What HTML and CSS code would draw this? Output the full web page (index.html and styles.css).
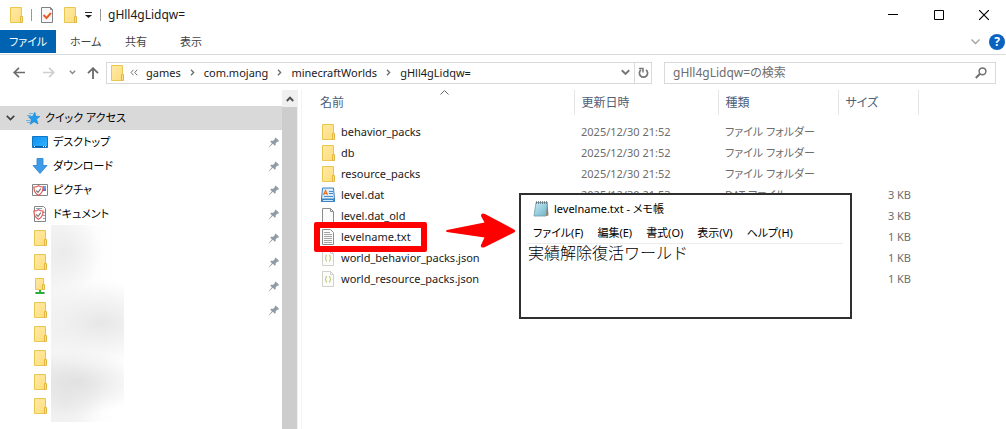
FILE: index.html
```html
<!DOCTYPE html>
<html lang="ja">
  <head>
    <meta charset="UTF-8" />
    <meta name="viewport" content="width=device-width, initial-scale=1.0" />
    <title>gHll4gLidqw=</title>
    <link rel="stylesheet" href="styles.css">
  </head>
  <body>
    <svg class="defs" aria-hidden="true">
      <defs>
        <linearGradient id="paper" x1="0" y1="0" x2="1" y2="1">
          <stop offset="0" stop-color="#ffe9a6" />
          <stop offset="1" stop-color="#ffdd7c" />
        </linearGradient>
        <linearGradient id="sky" x1="0" y1="0" x2="1" y2="1">
          <stop offset="0" stop-color="#0a92f0" />
          <stop offset="1" stop-color="#35b4ff" />
        </linearGradient>
        <linearGradient id="pad" x1="0" y1="0" x2="1" y2="1">
          <stop offset="0" stop-color="#c4ecf6" />
          <stop offset="1" stop-color="#6fb3c8" />
        </linearGradient>
        <symbol id="folder" viewBox="0 0 16 16">
          <path d="M2.5.5h11v15h-11z" fill="url(#paper)" stroke="#e9c64d" />
          <path d="M12.5 9.5h2v6h-2z" fill="#ffe08a" stroke="#e0b742" />
        </symbol>
        <symbol id="netfolder" viewBox="0 0 16 16">
          <path d="M3.5.5h8v11h-8z" fill="url(#paper)" stroke="#e9c64d" />
          <path d="M10.5 6.5h2v5h-2z" fill="#ffe08a" stroke="#e0b742" />
          <path d="M7 12h2v2h3v2H4v-2h3z" fill="#27b03a" />
          <path d="M3 14h1v2H3zM12 14h1v2h-1z" fill="#a5b5a8" />
        </symbol>
        <symbol id="pin" viewBox="0 0 12 12">
          <path d="M7 1l1-1 4 4-1 1-1 0-2 2 0 2-1 1-2.500-2.500L1 11l-1 1 0-1 3.500-4L1.500 5l1-1 2.500 0 2-2z" fill="#8f9ba6" />
        </symbol>
        <symbol id="chev" viewBox="0 0 5 7">
          <path d="M1 .8l2.600 2.700L1 6.200" fill="none" stroke="#6f6f6f" stroke-width="1.400" />
        </symbol>
        <symbol id="json" viewBox="0 0 16 16">
          <path d="M2.500.5h8l3 3v12h-11z" fill="#fcfcfa" stroke="#d0d0cc" />
          <path d="M10.500.5v3h3" fill="none" stroke="#d0d0cc" />
          <path d="M7 5.500h-1v2l-1 .7 1 .8v2h1M9 5.500h1v2l1 .7-1 .8v2h-1" fill="none" stroke="#bcc46c" />
        </symbol>
        <symbol id="shield" viewBox="0 0 12 12">
          <path d="M6 .7c1.500 1.300 3 1.500 5 1.500 0 4-.8 7-5 9-4.200-2-5-5-5-9 2 0 3.500-.2 5-1.500z" fill="#fff" stroke="#e25252" stroke-width="1.300" />
          <path d="M3.500 6l2 2 3-4" fill="none" stroke="#777" stroke-width="1.300" />
        </symbol>
      </defs>
    </svg>

    <header class="titlebar">
      <svg class="icon" width="16" height="16"><use href="#folder" /></svg>
      <span class="divider"></span>
      <button class="tool" aria-label="プロパティ">
        <svg width="16" height="16" viewBox="0 0 16 16">
          <path d="M2.500.5h9l2 2v13h-11z" fill="#f7f7f7" stroke="#828282" />
          <path d="M11.500.5v2h2" fill="none" stroke="#828282" />
          <path d="M4.500 8l3 3 4.500-5" fill="none" stroke="#ea5b25" stroke-width="2" />
        </svg>
      </button>
      <button class="tool" aria-label="新しいフォルダー">
        <svg width="16" height="16"><use href="#folder" /></svg>
      </button>
      <button class="tool" aria-label="カスタマイズ">
        <svg width="8" height="6" viewBox="0 0 8 6"><path d="M0 0h7v1H0zM0 3h7L3.500 6z" fill="#222" /></svg>
      </button>
      <span class="divider"></span>
      <h1 class="title">gHll4gLidqw=</h1>
      <div class="window-buttons">
        <button aria-label="最小化"><svg width="10" height="10" viewBox="0 0 10 10"><path d="M0 4.500h10" stroke="#000" /></svg></button>
        <button aria-label="最大化"><svg width="10" height="10" viewBox="0 0 10 10"><path d="M.5.5h9v9h-9z" fill="none" stroke="#000" /></svg></button>
        <button aria-label="閉じる"><svg width="10" height="10" viewBox="0 0 10 10"><path d="M0 0l10 10M10 0L0 10" stroke="#000" stroke-width="1.200" /></svg></button>
      </div>
    </header>

    <nav class="ribbon">
      <button class="tab file">ファイル</button>
      <button class="tab">ホーム</button>
      <button class="tab">共有</button>
      <button class="tab">表示</button>
      <div class="ribbon-end">
        <button class="tool" aria-label="リボンの展開"><svg width="9" height="6" viewBox="0 0 9 6"><path d="M.5.500l4 4 4-4" fill="none" stroke="#a0a0a0" stroke-width="1.300" /></svg></button>
        <button class="help" aria-label="ヘルプ">?</button>
      </div>
    </nav>

    <div class="address">
      <div class="history">
        <button class="tool nav" aria-label="戻る"><svg width="12" height="11" viewBox="0 0 12 11"><path d="M12 5.500H1.500M6 .8L1.200 5.500 6 10.200" fill="none" stroke="#6b6b6b" stroke-width="1.700" /></svg></button>
        <button class="tool nav" aria-label="進む"><svg width="12" height="11" viewBox="0 0 12 11"><path d="M0 5.500h10.500M6 .8l4.800 4.700L6 10.200" fill="none" stroke="#cfcfcf" stroke-width="1.700" /></svg></button>
        <button class="tool recent" aria-label="最近表示した場所"><svg width="7" height="5" viewBox="0 0 7 5"><path d="M.8.8l2.700 2.700L6.200.8" fill="none" stroke="#8a8a8a" stroke-width="1.500" /></svg></button>
        <button class="tool up" aria-label="上へ"><svg width="12" height="12" viewBox="0 0 12 12"><path d="M6 12V1.500M1 6.200l5-5 5 5" fill="none" stroke="#6b6b6b" stroke-width="1.800" /></svg></button>
      </div>
      <div class="path">
        <svg class="icon" width="16" height="16"><use href="#folder" /></svg>
        <svg class="back" width="8" height="7" viewBox="0 0 8 7"><path d="M3.500.8L1 3.500l2.500 2.700M7.200.8L4.700 3.500l2.500 2.700" fill="none" stroke="#6f6f6f" /></svg>
        <a href="#">games</a>
        <svg width="5" height="7"><use href="#chev" /></svg>
        <a href="#">com.mojang</a>
        <svg width="5" height="7"><use href="#chev" /></svg>
        <a href="#">minecraftWorlds</a>
        <svg width="5" height="7"><use href="#chev" /></svg>
        <a href="#">gHll4gLidqw=</a>
        <div class="path-end">
          <button class="tool" aria-label="以前の場所"><svg width="9" height="7" viewBox="0 0 9 7"><path d="M.8 1.200l3.700 3.700 3.700-3.700" fill="none" stroke="#777" stroke-width="2" /></svg></button>
          <button class="tool reload" aria-label="最新の情報に更新"><svg width="11" height="12" viewBox="0 0 11 12"><path d="M8 2.800a4.100 4.100 0 1 1-5 0" fill="none" stroke="#777" stroke-width="1.700" /><path d="M1 1.500h4v4" fill="none" stroke="#777" stroke-width="1.500" /></svg></button>
        </div>
      </div>
      <form class="search">
        <input type="search" aria-label="検索" placeholder="gHll4gLidqw=の検索" />
        <svg width="12" height="12" viewBox="0 0 12 12"><circle cx="7.500" cy="4.300" r="3.400" fill="none" stroke="#707070" stroke-width="1.500" /><path d="M5 6.800L.8 11" stroke="#707070" stroke-width="2" /></svg>
      </form>
    </div>

    <main class="content">
      <aside class="sidebar">
        <div class="tree">
          <a class="node root" href="#">
            <svg class="expand" width="9" height="6" viewBox="0 0 9 6"><path d="M.8.8l3.700 3.700L8.200.8" fill="none" stroke="#404040" stroke-width="1.700" /></svg>
            <svg class="star" width="14" height="13" viewBox="0 0 14 13"><path d="M8.800.3l1.100 4 4 .2-3.300 2.600 1.400 4.900-3.900-2.300-3.900 2.600 1.100-4.600L2.500 4.800l4.200-.4z" fill="#1e9bec" stroke="#1683cf" stroke-width=".6" /><path d="M3 1.500h4M1 3.500h4M0 8.500h4M1 10.500h3" stroke="#5faee0" stroke-width=".9" /></svg>
            クイック アクセス
          </a>
          <a class="node" href="#">
            <svg width="16" height="16" viewBox="0 0 16 16"><path d="M.5 2.500h15v11H.5z" fill="url(#sky)" stroke="#0f76c4" /><path d="M1 12h14v1H1z" fill="#0b5b9e" /><path d="M2 12h1v1H2zM11 12h1v1h-1zM13 12h1v1h-1z" fill="#fff" /></svg>
            デスクトップ
            <svg class="pin" width="10" height="11"><use href="#pin" /></svg>
          </a>
          <a class="node" href="#">
            <svg width="16" height="16" viewBox="0 0 16 16"><path d="M5 .5h6v7h4L8 15.500 1 7.500h4z" fill="#3d9bea" stroke="#2b82ce" stroke-width=".8" /></svg>
            ダウンロード
            <svg class="pin" width="10" height="11"><use href="#pin" /></svg>
          </a>
          <a class="node" href="#">
            <svg width="16" height="16" viewBox="0 0 16 16"><path d="M.5 2.500h15v11H.5z" fill="#fff" stroke="#858585" /><path d="M11 4h3v3h-3z" fill="#6aa0ee" /><path d="M11 7h3v2h-3z" fill="#5b78b8" /><use href="#shield" x="1" y="3" width="11" height="11" /></svg>
            ピクチャ
            <svg class="pin" width="10" height="11"><use href="#pin" /></svg>
          </a>
          <a class="node" href="#">
            <svg width="16" height="16" viewBox="0 0 16 16"><path d="M2.500.5h9l2 2v13h-11z" fill="#fff" stroke="#858585" /><path d="M4 2.500h6M11 6.500h2M11 9.500h2M11 12.500h2" stroke="#8d9db0" /><use href="#shield" x="1" y="3" width="11" height="11" /></svg>
            ドキュメント
            <svg class="pin" width="10" height="11"><use href="#pin" /></svg>
          </a>
          <div class="folders">
            <a class="node" href="#" aria-label="フォルダー"><svg width="16" height="16"><use href="#folder" /></svg><svg class="pin" width="10" height="11"><use href="#pin" /></svg></a>
            <a class="node" href="#" aria-label="フォルダー"><svg width="16" height="16"><use href="#folder" /></svg><svg class="pin" width="10" height="11"><use href="#pin" /></svg></a>
            <a class="node" href="#" aria-label="フォルダー"><svg width="16" height="16"><use href="#netfolder" /></svg><svg class="pin" width="10" height="11"><use href="#pin" /></svg></a>
            <a class="node" href="#" aria-label="フォルダー"><svg width="16" height="16"><use href="#folder" /></svg><svg class="pin" width="10" height="11"><use href="#pin" /></svg></a>
            <a class="node" href="#" aria-label="フォルダー"><svg width="16" height="16"><use href="#folder" /></svg></a>
            <a class="node" href="#" aria-label="フォルダー"><svg width="16" height="16"><use href="#folder" /></svg></a>
            <a class="node" href="#" aria-label="フォルダー"><svg width="16" height="16"><use href="#folder" /></svg></a>
            <a class="node" href="#" aria-label="フォルダー"><svg width="16" height="16"><use href="#folder" /></svg></a>
            <div class="blurred"></div>
          </div>
        </div>
        <div class="scrollbar">
          <button class="tool" aria-label="上へスクロール"><svg width="8" height="6" viewBox="0 0 8 6"><path d="M.8 5L4 1.600 7.200 5" fill="none" stroke="#505050" stroke-width="2" /></svg></button>
          <div class="thumb"></div>
        </div>
      </aside>

      <section class="files">
        <table>
          <colgroup>
            <col class="col-name" /><col class="col-date" /><col class="col-type" /><col class="col-size" /><col />
          </colgroup>
          <thead>
            <tr>
              <th class="sorted">名前<svg class="sort" width="9" height="5" viewBox="0 0 9 5"><path d="M.5 4.500l4-4 4 4" fill="none" stroke="#6a6a6a" /></svg></th>
              <th>更新日時</th><th>種類</th><th>サイズ</th><td></td>
            </tr>
          </thead>
          <tbody>
            <tr>
              <td><a href="#"><svg width="16" height="16"><use href="#folder" /></svg>behavior_packs</a></td>
              <td>2025/12/30 21:52</td><td>ファイル フォルダー</td><td></td><td></td>
            </tr>
            <tr>
              <td><a href="#"><svg width="16" height="16"><use href="#folder" /></svg>db</a></td>
              <td>2025/12/30 21:52</td><td>ファイル フォルダー</td><td></td><td></td>
            </tr>
            <tr>
              <td><a href="#"><svg width="16" height="16"><use href="#folder" /></svg>resource_packs</a></td>
              <td>2025/12/30 21:52</td><td>ファイル フォルダー</td><td></td><td></td>
            </tr>
            <tr>
              <td><a href="#"><svg width="16" height="16" viewBox="0 0 16 16"><path d="M2.500 1h11l1 11H1.500z" fill="#d9ecfa" stroke="#3d7db8" /><path d="M1 12h14v3H1z" fill="#3f86c4" /><path d="M3.500 8L5.500 3.500 7.500 8M4 6.500h3" fill="none" stroke="#e8702a" stroke-width="1.200" /><path d="M9 4.500h4M9 6.500h4M4 9.500h9" stroke="#4a8ac6" /><path d="M3 13.500h10" stroke="#cfe6f7" /></svg>level.dat</a></td>
              <td>2025/12/30 21:53</td><td>DAT ファイル</td><td>3 KB</td><td></td>
            </tr>
            <tr>
              <td><a href="#"><svg width="16" height="16" viewBox="0 0 16 16"><path d="M2.500.5h8l3 3v12h-11z" fill="#fbfbfb" stroke="#8c8c8c" /><path d="M10.500.5v3h3" fill="none" stroke="#8c8c8c" /></svg>level.dat_old</a></td>
              <td></td><td></td><td>3 KB</td><td></td>
            </tr>
            <tr>
              <td><a href="#"><svg width="16" height="16" viewBox="0 0 16 16"><path d="M2.500.5h8l3 3v12h-11z" fill="#fbfbfb" stroke="#8c8c8c" /><path d="M4 3.500h6M4 5.500h8M4 7.500h8M4 9.500h8M4 11.500h8M4 13.500h8" stroke="#a2a2a2" /></svg>levelname.txt</a></td>
              <td></td><td></td><td>1 KB</td><td></td>
            </tr>
            <tr>
              <td><a href="#"><svg width="16" height="16"><use href="#json" /></svg>world_behavior_packs.json</a></td>
              <td></td><td></td><td>1 KB</td><td></td>
            </tr>
            <tr>
              <td><a href="#"><svg width="16" height="16"><use href="#json" /></svg>world_resource_packs.json</a></td>
              <td></td><td></td><td>1 KB</td><td></td>
            </tr>
          </tbody>
        </table>

        <div class="highlight"></div>
        <svg class="arrow" width="70" height="36" viewBox="0 0 70 36"><path d="M1 17L38.500 9.500 35 3Q35-.5 39 1L68 16.500Q70.500 18 68 19.500L38 34.500Q34 35 35 32L38.500 24.500 1 19Q-1 18 1 17z" fill="#fe0000" /></svg>

        <div class="notepad">
          <div class="notepad-title">
            <svg width="16" height="16" viewBox="0 0 16 16"><path d="M3 1.500h11.500L13 15H1z" fill="url(#pad)" stroke="#6c9db0" stroke-width=".8" /><path d="M14.500 2L15.500 14.500 13 15z" fill="#8f8064" /><path d="M3.500 0v3M5.500 0v3M7.500 0v3M9.500 0v3M11.500 0v3M13.500 0v3" stroke="#58666c" stroke-width=".7" /></svg>
            levelname.txt - メモ帳
          </div>
          <div class="menu">
            <button>ファイル(F)</button>
            <button>編集(E)</button>
            <button>書式(O)</button>
            <button>表示(V)</button>
            <button>ヘルプ(H)</button>
          </div>
          <textarea aria-label="本文" spellcheck="false">実績解除復活ワールド</textarea>
        </div>
      </section>
    </main>
  </body>
</html>
```
FILE: styles.css
```css
* {
  box-sizing: border-box;
}
body {
  margin: 0;
  height: 100vh;
  display: flex;
  flex-direction: column;
  overflow: hidden;
  background: #fff;
  color: #1a1a1a;
  font: 11px/16px "Noto Sans", "Noto Sans CJK JP", sans-serif;
  font-feature-settings: "palt";
}
a {
  color: inherit;
  text-decoration: none;
}
button {
  margin: 0;
  padding: 0;
  border: 0;
  background: none;
  color: inherit;
  font: inherit;
  font-feature-settings: inherit;
}
svg {
  display: block;
  flex: none;
}
.defs {
  position: absolute;
  width: 0;
  height: 0;
}
.tool {
  display: flex;
  align-items: center;
  justify-content: center;
}

/* タイトルバー */
.titlebar {
  display: flex;
  align-items: center;
  height: 30px;
  padding-left: 8px;
  gap: 7px;
}
.divider {
  width: 1px;
  height: 12px;
  background: #999;
}
.title {
  margin: 0;
  font-size: 12px;
  font-weight: normal;
}
.window-buttons {
  display: flex;
  margin-left: auto;
}
.window-buttons button {
  display: flex;
  align-items: center;
  justify-content: center;
  width: 46px;
  height: 28px;
}
.window-buttons button:last-child {
  width: 44px;
}

/* リボン */
.ribbon {
  display: flex;
  height: 25px;
  border-bottom: 1px solid #dadbdc;
}
.tab {
  min-width: 55px;
  height: 23px;
  padding: 0 0 0 14px;
  color: #444;
  text-align: left;
}
.tab.file {
  width: 56px;
  padding: 0;
  background: #0063b1;
  color: #fff;
  text-align: center;
}
.ribbon-end {
  display: flex;
  align-items: center;
  gap: 9px;
  margin-left: auto;
  padding-right: 1px;
}
.help {
  width: 16px;
  height: 16px;
  border-radius: 50%;
  background: #0a63c0;
  color: #fff;
  font-size: 12px;
  font-weight: bold;
  text-align: center;
}

/* アドレスバー */
.address {
  display: flex;
  align-items: center;
  height: 35px;
  padding: 0 10px 0 4px;
}
.history {
  display: flex;
  align-items: center;
}
.nav {
  width: 30px;
}
.recent {
  width: 16px;
}
.up {
  width: 26px;
}
.path {
  display: flex;
  align-items: center;
  flex: 1;
  height: 22px;
  padding-left: 2px;
  gap: 9px;
  border: 1px solid #d9d9d9;
}
.path .icon {
  margin-right: -4px;
}
.path .back {
  margin-right: -1px;
}
.path-end {
  display: flex;
  align-self: stretch;
  margin-left: auto;
}
.path-end .tool {
  width: 17px;
}
.path-end .reload {
  border-left: 1px solid #d9d9d9;
}
.search {
  display: flex;
  align-items: center;
  width: 332px;
  height: 22px;
  margin-left: 12px;
  padding: 0 8px;
  border: 1px solid #d9d9d9;
}
.search input {
  flex: 1;
  min-width: 0;
  padding: 0;
  border: 0;
  outline: 0;
  font: inherit;
  font-size: 12px;
  font-feature-settings: inherit;
}
.search input::placeholder {
  color: #6d6d6d;
}

/* ナビゲーション */
.content {
  display: flex;
  flex: 1;
  min-height: 0;
}
.sidebar {
  display: flex;
  width: 302px;
  padding-right: 3px;
  border-right: 1px solid #f3f3f3;
}
.tree {
  flex: 1;
  padding-top: 16px;
}
.node {
  display: flex;
  align-items: center;
  height: 24px;
  padding: 0 3px 0 32px;
  gap: 5px;
  color: #000;
}
.node.root {
  padding-left: 6px;
  background: #d9d9d9;
}
.star {
  margin-left: 6px;
}
.pin {
  margin-left: auto;
}
.folders {
  position: relative;
}
.blurred {
  position: absolute;
  top: -1px;
  left: 51px;
  width: 73px;
  height: 197px;
  background:
    radial-gradient(ellipse 40px 40px at 12px 28px, #ebebeb, #ebebeb00),
    radial-gradient(ellipse 70px 42px at 50px 98px, #e7e7e7, #e7e7e700),
    radial-gradient(ellipse 70px 32px at 24px 157px, #e1e1e1, #e1e1e100),
    radial-gradient(ellipse 40px 40px at 14px 175px, #ebebeb, #ebebeb00),
    linear-gradient(to right, #f5f5f5, #fdfdfd 60%, #fff);
}
.scrollbar {
  display: flex;
  flex-direction: column;
  width: 16px;
  background: #f0f0f0;
}
.scrollbar .tool {
  height: 17px;
}
.thumb {
  flex: 1;
  width: 15px;
  background: #cdcdcd;
}

/* ファイル一覧 */
.files {
  position: relative;
  flex: 1;
  min-width: 0;
}
table {
  width: 100%;
  table-layout: fixed;
  border-collapse: collapse;
}
.col-name {
  width: 272px;
}
.col-date {
  width: 144px;
}
.col-type {
  width: 120px;
}
.col-size {
  width: 80px;
}
th {
  position: relative;
  height: 25px;
  padding: 0 0 0 7px;
  border-right: 1px solid #e5e5e5;
  color: #4c607a;
  font-size: 12px;
  font-weight: normal;
  text-align: left;
}
th.sorted {
  padding-left: 18px;
}
.sort {
  position: absolute;
  top: 0;
  left: 138px;
}
tbody::before {
  content: "";
  display: block;
  height: 6px;
}
tbody td {
  height: 21px;
  padding: 0 7px;
  color: #6d6d6d;
  white-space: nowrap;
}
tbody td:first-child {
  padding-left: 18px;
  color: #1a1a1a;
}
tbody td:nth-child(4) {
  text-align: right;
}
tbody a {
  display: flex;
  align-items: center;
  gap: 5px;
}

/* 注釈 */
.highlight {
  position: absolute;
  top: 132px;
  left: 12px;
  width: 113px;
  height: 30px;
  border: 6px solid #fe0000;
  border-radius: 2px;
}
.arrow {
  position: absolute;
  top: 123px;
  left: 144px;
}

/* メモ帳 */
.notepad {
  position: absolute;
  top: 103px;
  left: 217px;
  width: 333px;
  height: 126px;
  display: flex;
  flex-direction: column;
  padding: 0 7px 4px 6px;
  border: 2px solid #2f2f2f;
  background: #fff;
}
.notepad-title {
  display: flex;
  align-items: center;
  height: 28px;
  padding-left: 6px;
  gap: 5px;
  color: #000;
}
.menu {
  display: flex;
  height: 21px;
  padding-left: 6px;
  gap: 14px;
  border-bottom: 1px solid #ececec;
  color: #000;
}
.notepad textarea {
  flex: 1;
  padding: 0 1px;
  border: 0;
  outline: 0;
  resize: none;
  color: #000;
  font: 300 16px/16px "Noto Sans CJK JP", sans-serif;
}
```
